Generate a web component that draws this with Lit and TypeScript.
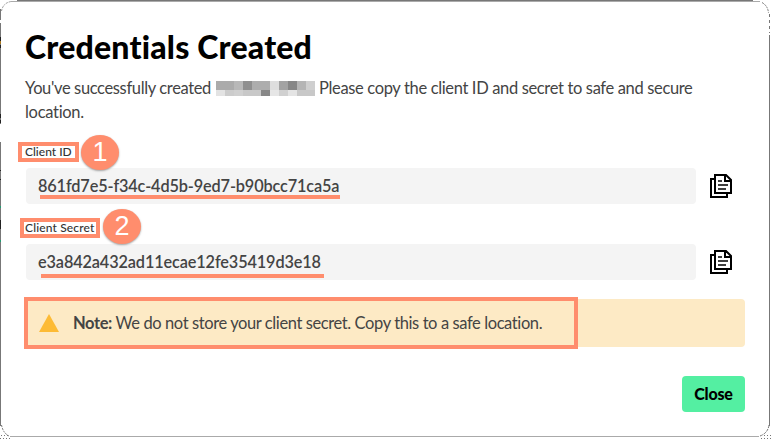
import { LitElement, html, css, svg } from "lit";
import { customElement, property } from "lit/decorators.js";

const top = ["ab", "ab", "b8", "8f", "ad", "ad", "de", "a3", "87", "b5", "cf"];
const low = ["e3", "cc", "d0", "c8", "c8", "87", "e6", "d0", "e4", "c8", "c8"];

@customElement("redacted-name")
export class RedactedName extends LitElement {
  static styles = css`
    :host { display: inline-block; width: 99px; height: 15px; }
    .pixels { display: block; }
  `;
  render() {
    return html`<svg class="pixels" width="99" height="15" shape-rendering="crispEdges">
      ${top.map((c, i) => svg`<rect x=${i * 9} y="0" width="9" height="9" fill=${"#" + c + c + c} />`)}
      ${low.map((c, i) => svg`<rect x=${i * 9} y="9" width="9" height="6" fill=${"#" + c + c + c} />`)}
    </svg>`;
  }
}

@customElement("credential-field")
export class CredentialField extends LitElement {
  @property() label = "";
  @property() value = "";
  @property() kind = "id";
  @property() step = "";

  static styles = css`
    :host { display: block; height: 76px; position: relative; }
    .label { height: 26px; line-height: 20px; font-size: 12px; color: #333; font-weight: 500; white-space: nowrap; }
    .secret .label { letter-spacing: 0.15px; }
    .row { display: flex; align-items: center; gap: 14px; margin-left: 1px; }
    .value { box-sizing: border-box; width: 670px; height: 36px; border-radius: 4px; background: #f4f4f4; padding-left: 12px; font-size: 16.3px; line-height: 36px; font-weight: 600; color: #444; white-space: nowrap; }
    .id .value { letter-spacing: -0.14px; }
    .secret .value { letter-spacing: -0.13px; }
    .copy { display: block; }
    .frame, .line, .badge { position: absolute; box-sizing: border-box; }
    .frame { border: 4px solid #ff8d6d; height: 20px; top: 0; }
    .id .frame { left: -7px; width: 61px; }
    .secret .frame { left: -5px; width: 80px; }
    .line { height: 4px; background: #ff8d6d; }
    .id .line { left: 15px; width: 300px; top: 53px; }
    .secret .line { left: 16px; width: 283px; top: 56px; }
    .badge { width: 38px; height: 35px; border-radius: 50%; background: #ff8d6d; color: #fff; font: 27px/34px "Liberation Sans", sans-serif; text-align: center; box-shadow: 0 1px 2px #777a; }
    .id .badge { left: 56px; top: -7px; }
    .secret .badge { left: 78px; top: -9px; }
  `;
  render() {
    return html`<div class=${this.kind}>
      <div class="label"><span>${this.label}</span></div>
      <div class="row">
        <div class="value"><span>${this.value}</span></div>
        <svg class="copy" width="22" height="24" viewBox="0 0 22 24" fill="none" stroke="#000" stroke-width="2">
          <path d="M5 1H16L21 6V19H5ZM5 5H1V23H17V19M15 1V7H21" />
          <path d="M8 7H12M8 11H18M8 15H16" stroke-width="1.6" />
        </svg>
      </div>
      <div class="frame"></div><div class="line"></div><div class="badge">${this.step}</div>
    </div>`;
  }
}

@customElement("app-root")
export class AppRoot extends LitElement {
  static styles = css`
    :host { display: block; position: relative; width: 771px; height: 440px; background: #fff; overflow: hidden; font-family: Lato, "Open Sans", sans-serif; }
    .dialog { box-sizing: border-box; width: 770px; height: 437px; padding: 29px 25px 0; background: #fff; }
    .edge { position: absolute; left: 0; top: 0; pointer-events: none; }
    .title { margin: 0; height: 46px; font-size: 32px; line-height: 35px; font-weight: 900; letter-spacing: 0.2px; color: #000; white-space: nowrap; }
    .text { height: 67px; font-size: 16.5px; line-height: 26px; color: #444; white-space: nowrap; }
    .line { display: flex; height: 24px; }
    .first { width: 191px; letter-spacing: -0.36px; }
    .second { letter-spacing: -0.35px; }
    .last { letter-spacing: -0.3px; }
    .block { margin-top: 6px; margin-right: 4px; }
    .note { position: relative; display: flex; align-items: center; box-sizing: border-box; width: 719px; height: 48px; margin: 5px 0 29px 1px; padding-left: 13px; border-radius: 4px; background: #fdeac5; color: #444; font-size: 16.5px; white-space: nowrap; }
    .message { letter-spacing: -0.4px; }
    .warn { margin-right: 14px; }
    .mark { position: absolute; left: -2px; top: -2px; width: 554px; height: 52px; box-sizing: border-box; border: 4px solid #ff8d6d; }
    .actions { display: flex; justify-content: flex-end; width: 720px; }
    .close { width: 63px; height: 36px; padding: 0; border: 0; border-radius: 4px; background: #54efa2; color: #000; font: 900 16px/36px Lato, sans-serif; letter-spacing: -0.2px; }
  `;
  render() {
    return html`<section class="dialog">
      <h1 class="title"><span>Credentials Created</span></h1>
      <div class="text">
        <div class="line"><span class="first">You've successfully created</span><redacted-name class="block"></redacted-name><span class="second">Please copy the client ID and secret to safe and secure</span></div>
        <div class="line"><span class="last">location.</span></div>
      </div>
      <credential-field kind="id" step="1" label="Client ID" value="861fd7e5-f34c-4d5b-9ed7-b90bcc71ca5a"></credential-field>
      <credential-field kind="secret" step="2" label="Client Secret" value="e3a842a432ad11ecae12fe35419d3e18"></credential-field>
      <div class="note">
        <svg class="warn" width="20" height="18"><path d="M10 0L20 18H0Z" fill="#fdbb35" /></svg>
        <span class="message"><b>Note:</b> We do not store your client secret. Copy this to a safe location.</span>
        <div class="mark"></div>
      </div>
      <div class="actions"><button class="close">Close</button></div>
    </section>
    <svg class="edge" width="771" height="440" fill="none" stroke="#777">
      <path d="M17 .5H753M.5 9V20M.5 23V124M.5 142V426M769.5 35V426" />
      <path d="M11 1.5H760M10 436.5H759" stroke="#aaa" />
      <path d="M1.5 11Q3 3 11 1.5" stroke="#999" stroke-dasharray="2 1" />
      <path d="M762 2.5Q768 6 768.5 13" stroke-dasharray="2 1" />
      <path d="M769.5 14V33" stroke-dasharray="3 3" />
      <path d="M1.5 425Q3 433 9 436" stroke-dasharray="2 1" />
      <path d="M769 425Q768 433 760 436" stroke-dasharray="3 1" />
      <path d="M1 435.5H9M0 438.5H11M761 438.5H771M764 435.5H771" stroke-dasharray="1 2" />
      <path d="M.5 37V41M.5 45V48M.5 114V118M.5 120V123M.5 170V171M.5 179V180M.5 220V229" stroke="#222" />
      <path d="M.5 41V44" stroke="#a87820" />
      <path d="M.5 206V208M.5 240V242" stroke="#239b72" />
    </svg>`;
  }
}
